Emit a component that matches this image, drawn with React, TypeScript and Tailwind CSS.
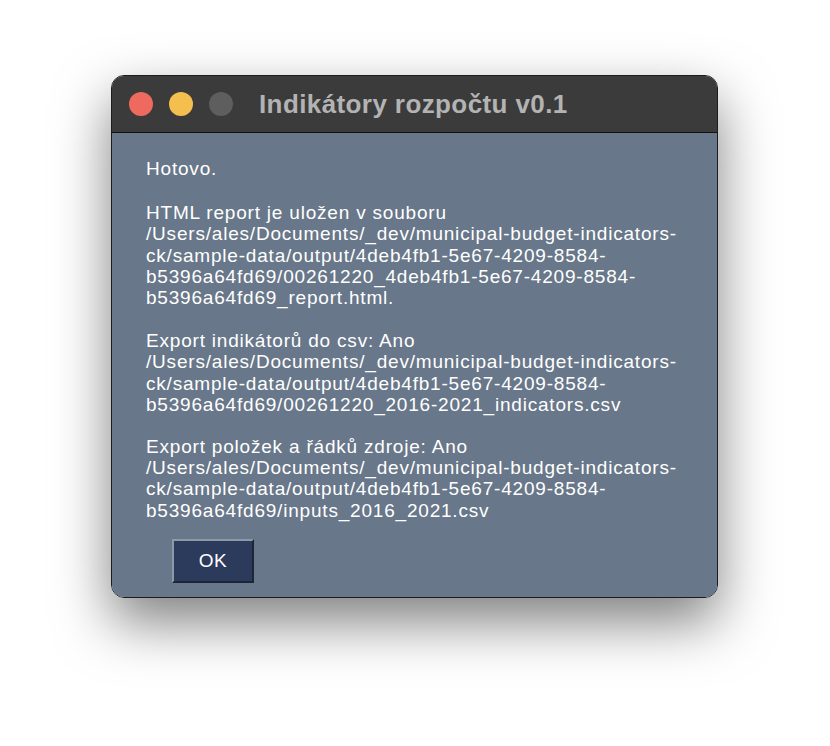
export default function App() {
  return (
    <div className="w-[830px] h-[746px] bg-white pt-[75px] pl-[111px]" style={{ fontFamily: '"Liberation Sans", Arial, sans-serif' }}>
      <div className="w-[607px] h-[523px] rounded-[13px] overflow-hidden border border-[#1c1c1c] flex flex-col shadow-[0_24px_55px_rgba(0,0,0,0.5)]">
        {/* Title bar */}
        <div className="h-[57px] shrink-0 bg-[#3b3b3b] border-b border-[#111] flex items-center pl-[17px]">
          <div className="flex gap-[16px]">
            <span className="w-[24px] h-[24px] rounded-full bg-[#ee6a5f]" />
            <span className="w-[24px] h-[24px] rounded-full bg-[#f5bf4f]" />
            <span className="w-[24px] h-[24px] rounded-full bg-[#5e5e5e]" />
          </div>
          <div className="ml-[26px] text-[26px] font-bold tracking-[0.4px] text-[#b3b3b3]">Indikátory rozpočtu v0.1</div>
        </div>
        {/* Content */}
        <div className="flex-1 bg-[#687789] text-white text-[19px] tracking-[0.8px] leading-[21.2px] pl-[34px] pt-[25px]">
          <p>Hotovo.</p>
          <p className="mt-[23px]">
            HTML report je uložen v souboru
            <br />/Users/ales/Documents/_dev/municipal-budget-indicators-
            <br />ck/sample-data/output/4deb4fb1-5e67-4209-8584-
            <br />b5396a64fd69/00261220_4deb4fb1-5e67-4209-8584-
            <br />b5396a64fd69_report.html.
          </p>
          <p className="mt-[22px]">
            Export indikátorů do csv: Ano
            <br />/Users/ales/Documents/_dev/municipal-budget-indicators-
            <br />ck/sample-data/output/4deb4fb1-5e67-4209-8584-
            <br />b5396a64fd69/00261220_2016-2021_indicators.csv
          </p>
          <p className="mt-[21px]">
            Export položek a řádků zdroje: Ano
            <br />/Users/ales/Documents/_dev/municipal-budget-indicators-
            <br />ck/sample-data/output/4deb4fb1-5e67-4209-8584-
            <br />b5396a64fd69/inputs_2016_2021.csv
          </p>
          <button className="mt-[18px] ml-[26px] w-[82px] h-[44px] bg-[#2c3a5b] border-t-2 border-l-2 border-b-2 border-r-2 border-t-[#8d99a9] border-l-[#8d99a9] border-b-[#1e2538] border-r-[#1e2538] text-[19px] tracking-[0.5px] text-white flex items-center justify-center">
            OK
          </button>
        </div>
      </div>
    </div>
  );
}
